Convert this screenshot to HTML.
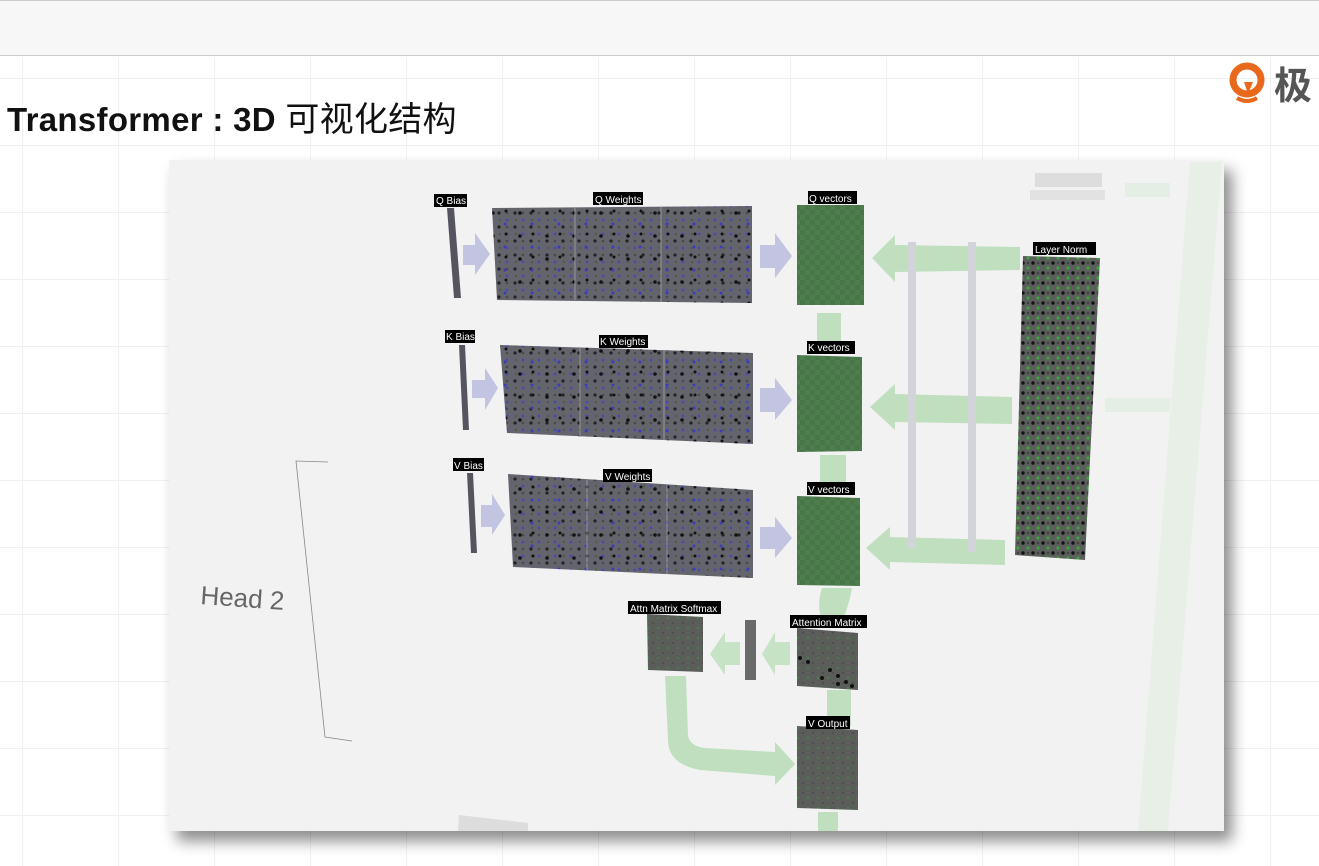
<!DOCTYPE html>
<html><head><meta charset="utf-8"><style>
html,body{margin:0;padding:0;width:1319px;height:866px;overflow:hidden;background:#fff;font-family:"Liberation Sans","Noto Sans CJK SC",sans-serif}
.top{position:absolute;left:0;top:0;width:1319px;height:56px;background:#f7f7f7;border-top:1px solid #ccc;border-bottom:1px solid #ccc;box-sizing:border-box}
.grid{position:absolute;left:0;top:57px;width:1319px;height:809px;
background-image:repeating-linear-gradient(to right,transparent 0 22px,#f0f0f0 22px 23px,transparent 23px 96px),repeating-linear-gradient(to bottom,transparent 0 21px,#f0f0f0 21px 22px,transparent 22px 67px)}
h1{position:absolute;left:7px;top:92px;margin:0;font-size:33px;font-weight:bold;color:#111;white-space:nowrap;letter-spacing:0.3px}
h1 span{font-weight:normal;font-size:34px}
.panel{position:absolute;left:169px;top:160px;width:1055px;height:671px;background:#f2f2f2;box-shadow:8px 10px 14px rgba(0,0,0,0.45)}
.logo{position:absolute;left:1229px;top:62px}
.logotxt{position:absolute;left:1274px;top:60px;font-size:38px;color:#555;font-weight:bold;font-family:"Noto Sans CJK SC",sans-serif;line-height:1.2}
svg{position:absolute;left:0;top:0}
.lab{font-family:"Liberation Sans",sans-serif;font-size:10px;fill:#fff}
</style></head><body>
<div class="top"></div>
<div class="grid"></div>
<h1>Transformer : 3D <span>可视化结构</span></h1>
<svg class="logo" width="40" height="44" viewBox="0 0 40 44"><circle cx="18" cy="18" r="14" fill="none" stroke="#e8681c" stroke-width="7"/><path d="M8 36 Q18 42 28 36" stroke="#e8681c" stroke-width="4" fill="none"/><path d="M15 20 L19 32 L24 20Z" fill="#e8681c"/></svg>
<div class="logotxt">极</div>
<div class="panel"></div>
<svg width="1319" height="866" viewBox="0 0 1319 866">
<defs>
<pattern id="pd" width="16" height="14" patternUnits="userSpaceOnUse"><rect width="16" height="14" fill="#64646c"/><circle cx="3" cy="3" r="1.6" fill="#222"/><circle cx="11" cy="10" r="1.4" fill="#4848b0"/><circle cx="11" cy="3" r="1.3" fill="#4a4a4a"/><circle cx="4" cy="10" r="1.2" fill="#555"/></pattern>
<pattern id="pd2" width="27" height="23" patternUnits="userSpaceOnUse"><circle cx="7" cy="6" r="1.8" fill="#111"/><circle cx="19" cy="17" r="1.5" fill="#3c3cc0"/><circle cx="20" cy="4" r="1.5" fill="#111"/></pattern>
<pattern id="pg" width="10" height="10" patternUnits="userSpaceOnUse"><rect width="10" height="10" fill="#4e7d4e"/><rect width="5" height="5" fill="#497649"/><rect x="5" y="5" width="5" height="5" fill="#497649"/></pattern>
<pattern id="pl" width="10" height="10" patternUnits="userSpaceOnUse"><rect width="10" height="10" fill="#5b5f5b"/><circle cx="3" cy="3" r="1.7" fill="#111"/><circle cx="8" cy="8" r="1.6" fill="#3ca33c"/><circle cx="8" cy="3" r="1.3" fill="#444"/></pattern>
<pattern id="pa" width="10" height="10" patternUnits="userSpaceOnUse"><rect width="10" height="10" fill="#5a5d5a"/><circle cx="3" cy="3" r="1.2" fill="#4f4f4f"/><circle cx="8" cy="8" r="1.2" fill="#3a9a3a" opacity=".5"/></pattern>
</defs>
<polygon points="1190,162 1222,162 1168,831 1138,831" fill="#e7efe7"/>
<path d="M1170,190 H1125 M1170,405 H1105" stroke="#e5eee5" stroke-width="14"/>
<rect x="1035" y="173" width="67" height="14" fill="#ddd"/><rect x="1030" y="190" width="75" height="10" fill="#e2e2e2"/>
<g fill="#bfdfbf">
<polygon points="1020,247 895,245 895,235 872,258 895,282 895,272 1020,270"/>
<polygon points="1012,397 895,394 895,384 870,407 895,430 895,422 1012,424"/>
<polygon points="1005,540 890,537 890,527 866,548 890,570 890,562 1005,565"/>
<rect x="817" y="313" width="24" height="40"/><rect x="820" y="455" width="26" height="40"/>
<path d="M822 588 Q815 610 825 625 L840 625 Q848 610 852 588Z"/>
<rect x="827" y="690" width="24" height="36"/>
<path d="M665 676 L686 676 L688 736 Q690 746 705 748 L775 752 L775 742 L795 764 L775 785 L775 776 L700 770 Q668 764 668 740Z"/>
<rect x="818" y="812" width="20" height="19"/>
</g>
<rect x="908" y="242" width="8" height="306" fill="#d3d3da"/><rect x="968" y="242" width="8" height="310" fill="#d3d3da"/>
<g fill="#c3c3e2">
<polygon points="463,245 475,245 475,233 490,254 475,275 475,265 463,265"/>
<polygon points="760,245 775,245 775,233 792,256 775,278 775,268 760,268"/>
<polygon points="472,380 485,380 485,368 498,388 485,410 485,398 472,398"/>
<polygon points="760,388 775,388 775,378 792,400 775,420 775,412 760,412"/>
<polygon points="481,505 492,505 492,494 505,515 492,535 492,527 481,527"/>
<polygon points="760,527 775,527 775,517 792,538 775,558 775,549 760,549"/>
</g>
<g fill="#c6e3c6"><polygon points="790,642 775,642 775,632 762,654 775,675 775,665 790,665"/><polygon points="740,642 725,642 725,632 710,654 725,675 725,665 740,665"/></g>
<g fill="#55555f"><polygon points="447,208 454,208 461,298 454,298"/><polygon points="459,345 465,345 469,430 463,430"/><polygon points="467,473 473,473 477,553 471,553"/></g>
<polygon points="492,208 752,206 752,303 497,300" fill="url(#pd)"/><polygon points="492,208 752,206 752,303 497,300" fill="url(#pd2)"/>
<polygon points="500,345 753,353 753,444 507,433" fill="url(#pd)"/><polygon points="500,345 753,353 753,444 507,433" fill="url(#pd2)"/>
<polygon points="508,474 753,490 753,578 513,567" fill="url(#pd)"/><polygon points="508,474 753,490 753,578 513,567" fill="url(#pd2)"/>
<g stroke="#999" stroke-width="1"><path d="M575,208V300M661,207V302M580,347V437M664,350V440M587,479V570M667,484V574"/></g>
<rect x="797" y="205" width="67" height="100" fill="url(#pg)"/>
<polygon points="797,355 862,357 862,451 797,452" fill="url(#pg)"/>
<polygon points="797,496 860,498 860,586 797,585" fill="url(#pg)"/>
<polygon points="1023,256 1100,258 1085,560 1015,555" fill="url(#pl)"/>
<polygon points="647,614 703,617 703,672 648,670" fill="url(#pa)"/>
<rect x="745" y="620" width="11" height="60" fill="#6a6a6a"/>
<polygon points="797,628 858,633 858,690 797,686" fill="url(#pa)"/>
<g fill="#111"><circle cx="830" cy="670" r="2"/><circle cx="838" cy="676" r="2"/><circle cx="846" cy="682" r="2"/><circle cx="838" cy="684" r="2"/><circle cx="852" cy="686" r="2"/><circle cx="822" cy="678" r="2"/><circle cx="800" cy="658" r="2"/><circle cx="808" cy="662" r="2"/></g>
<polygon points="797,726 858,730 858,810 797,808" fill="url(#pa)"/>
<path d="M328,462 L296,461 L325,737 L352,741" stroke="#888" fill="none" stroke-width="0.8"/>
<text x="200" y="604" font-size="26" fill="#666" transform="rotate(4 200 604)" font-family="Liberation Sans,sans-serif">Head 2</text>
<polygon points="459,815 528,823 528,831 458,831" fill="#ddd"/>
<g>
<rect x="434" y="194" width="33" height="13" fill="#000"/><text class="lab" x="436" y="204">Q Bias</text>
<rect x="593" y="192" width="50" height="13" fill="#000"/><text class="lab" x="595" y="203">Q Weights</text>
<rect x="808" y="191" width="49" height="13" fill="#000"/><text class="lab" x="809" y="202">Q vectors</text>
<rect x="445" y="330" width="30" height="13" fill="#000"/><text class="lab" x="446" y="340">K Bias</text>
<rect x="599" y="335" width="49" height="13" fill="#000"/><text class="lab" x="600" y="345">K Weights</text>
<rect x="807" y="341" width="48" height="13" fill="#000"/><text class="lab" x="808" y="351">K vectors</text>
<rect x="453" y="458" width="31" height="13" fill="#000"/><text class="lab" x="454" y="469">V Bias</text>
<rect x="603" y="469" width="49" height="13" fill="#000"/><text class="lab" x="605" y="480">V Weights</text>
<rect x="807" y="482" width="48" height="13" fill="#000"/><text class="lab" x="808" y="493">V vectors</text>
<rect x="1033" y="242" width="63" height="13" fill="#000"/><text class="lab" x="1035" y="253">Layer Norm</text>
<rect x="628" y="601" width="93" height="13" fill="#000"/><text class="lab" x="630" y="612">Attn Matrix Softmax</text>
<rect x="790" y="615" width="77" height="13" fill="#000"/><text class="lab" x="792" y="626">Attention Matrix</text>
<rect x="806" y="716" width="44" height="13" fill="#000"/><text class="lab" x="808" y="727">V Output</text>
</g>
</svg>
</body></html>
